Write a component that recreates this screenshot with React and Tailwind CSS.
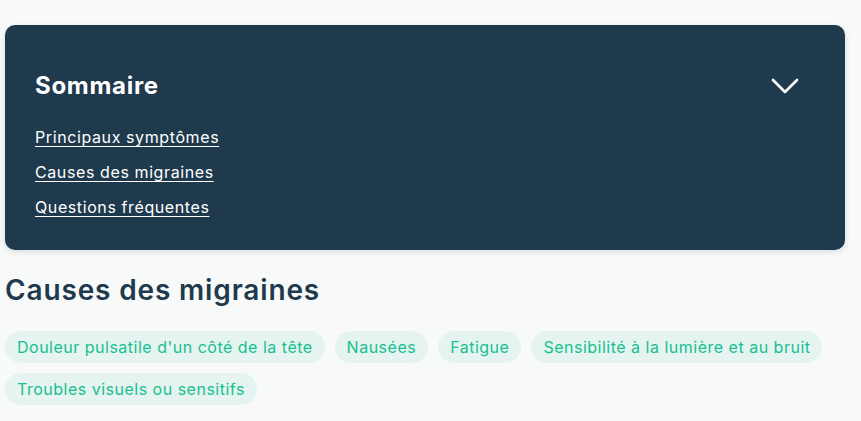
import { useState } from 'react'

const links = ['Principaux symptômes', 'Causes des migraines', 'Questions fréquentes']

const causes = [
  "Douleur pulsatile d'un côté de la tête",
  'Nausées',
  'Fatigue',
  'Sensibilité à la lumière et au bruit',
  'Troubles visuels ou sensitifs',
]

export default function App() {
  const [open, setOpen] = useState(true)

  return (
    <div className="min-h-[421px] bg-[#f8fafa] pl-[5px] pr-[16px] pt-[25px] font-['Inter',sans-serif]">
      <div className="rounded-[10px] bg-[#1f3a4d] px-[30px] pt-[45px] pb-[31px] shadow-[0_2px_6px_rgba(0,0,0,0.12)]">
        <div className="flex items-center justify-between">
          <h2 className="text-[24px] leading-[32px] font-bold text-white tracking-[0.7px]">Sommaire</h2>
          <button onClick={() => setOpen(!open)} className="mr-[16px] text-white">
            <svg width="28" height="18" viewBox="0 0 28 18" fill="none" stroke="currentColor" strokeWidth="2.6" strokeLinecap="round" strokeLinejoin="round" className={open ? '' : 'rotate-180'}>
              <path d="M2 3 L14 15 L26 3" />
            </svg>
          </button>
        </div>
        {open && (
          <ul className="mt-[23px] flex flex-col gap-[11px]">
            {links.map(l => (
              <li key={l}>
                <a href="#" className="text-[16px] leading-[24px] text-white underline underline-offset-[3px] tracking-[0.6px]">{l}</a>
              </li>
            ))}
          </ul>
        )}
      </div>

      <h2 className="mt-[22px] text-[28px] leading-[36px] font-semibold text-[#1f3a4d] tracking-[0.85px]">Causes des migraines</h2>

      <div className="mt-[23px] flex flex-wrap gap-[10px]">
        {causes.map(c => (
          <span key={c} className="rounded-full bg-[#e5f4f1] px-[12px] py-[4px] text-[16px] leading-[24px] text-[#17c08e] tracking-[0.5px]">{c}</span>
        ))}
      </div>
    </div>
  )
}
